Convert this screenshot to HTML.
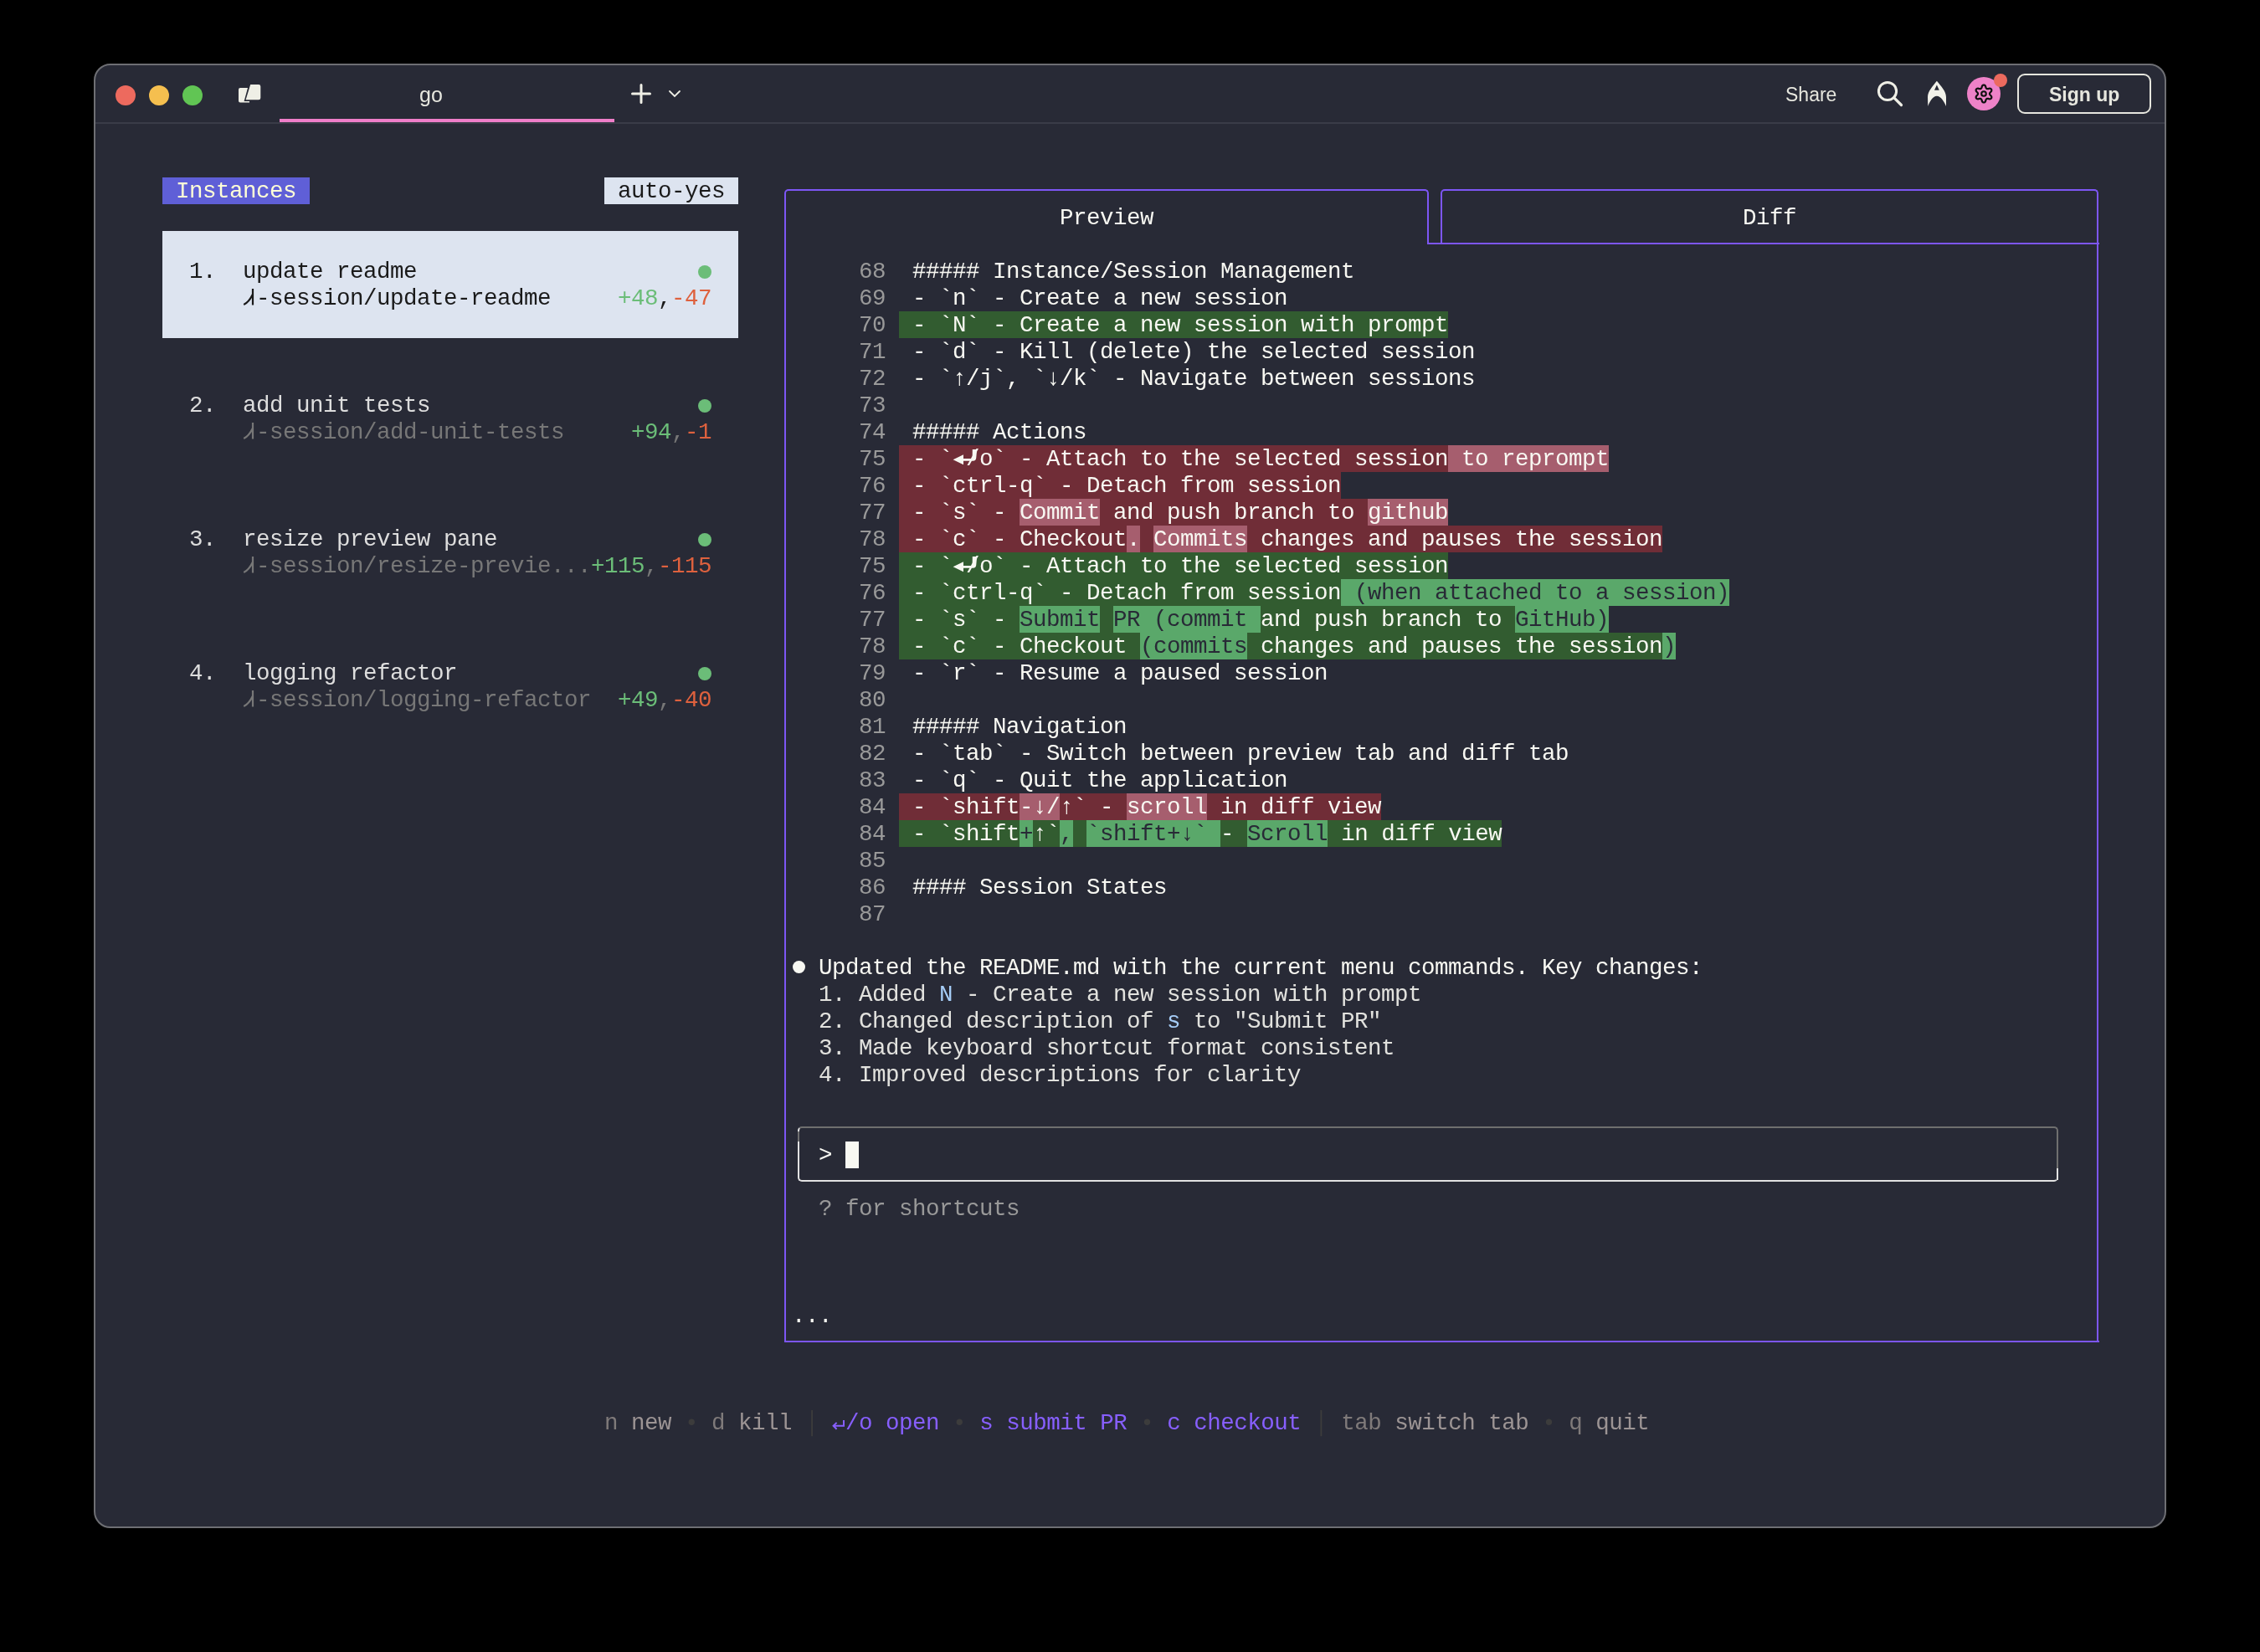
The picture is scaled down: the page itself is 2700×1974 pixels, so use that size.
<!DOCTYPE html>
<html><head><meta charset="utf-8">
<style>
html,body{margin:0;padding:0;background:#000;width:2700px;height:1974px;overflow:hidden;position:relative}
.win{position:absolute;left:112px;top:76px;width:2476px;height:1750px;box-sizing:border-box;border:2px solid #6e6f74;border-radius:20px;background:#282a36}
.dot{position:absolute;width:24px;height:24px;border-radius:50%}
.ui{position:absolute;font-family:"Liberation Sans",sans-serif;line-height:32px;white-space:pre}
.t{position:absolute;font-family:"Liberation Mono",monospace;font-size:27.5px;letter-spacing:-0.5025px;line-height:32px;height:32px;white-space:pre;color:#f8f8f2}
.ret,.ret2{position:absolute;width:16px;height:32px}
.ret::before{content:"";position:absolute;left:3px;top:15px;width:12px;height:3px;background:#f8f8f2}
.ret::after{content:"";position:absolute;left:1px;top:11px;width:0;height:0;border-top:5.5px solid transparent;border-bottom:5.5px solid transparent;border-right:8px solid #f8f8f2}
</style></head><body>
<div id="root" style="position:absolute;left:0;top:0;width:2700px;height:1974px;will-change:transform">

<div class="win"></div>
<div class="dot" style="left:138px;top:102px;background:#ed6a5e"></div>
<div class="dot" style="left:178px;top:102px;background:#f5bf4f"></div>
<div class="dot" style="left:218px;top:102px;background:#61c554"></div>
<svg style="position:absolute;left:282px;top:98px" width="32" height="28" viewBox="0 0 32 28">
  <path d="M3 9 a2 2 0 0 1 2 -2 H14 L9.6 23 H16 V24.5 H5 a2 2 0 0 1 -2 -2 Z" fill="#efefe6"/>
  <path d="M17.2 3 H27 a2.3 2.3 0 0 1 2.3 2.3 V19 a2.3 2.3 0 0 1 -2.3 2.3 H11.6 Z" fill="#efefe6"/>
</svg>
<div class="ui" style="left:501px;top:97px;font-size:25px;color:#e6e6de">go</div>
<div style="position:absolute;left:334px;top:142px;width:400px;height:4px;background:#ef7ec9"></div>
<div style="position:absolute;left:114px;top:146px;width:2472px;height:2px;background:#3a3c48"></div>
<svg style="position:absolute;left:752px;top:98px" width="28" height="28" viewBox="0 0 28 28">
  <path d="M14 3.5 v21 M3.5 14 h21" stroke="#efefe6" stroke-width="3" stroke-linecap="round"/>
</svg>
<svg style="position:absolute;left:796px;top:104px" width="20" height="16" viewBox="0 0 20 16">
  <path d="M4 5 l6 6 l6 -6" stroke="#efefe6" stroke-width="1.8" fill="none" stroke-linecap="round"/>
</svg>
<div class="ui" style="left:2133px;top:97px;font-size:23px;color:#e6e6de">Share</div>
<svg style="position:absolute;left:2240px;top:94px" width="36" height="36" viewBox="0 0 36 36">
  <circle cx="15" cy="15" r="10.6" stroke="#efefe6" stroke-width="3" fill="none"/>
  <path d="M22.6 22.6 L31.5 31.5" stroke="#efefe6" stroke-width="3.2" stroke-linecap="round"/>
</svg>
<svg style="position:absolute;left:2300px;top:96px" width="28" height="32" viewBox="0 0 28 32">
  <path d="M13.9 0.7 C 9 7, 3 13, 3 20 L 3.3 31 C 5 26, 9 18.8, 13.9 18.8 C 18.8 18.8, 23 26, 25 31 L 25 20 C 25 13, 19 7, 13.9 0.7 Z M13.9 5.5 L 11 11.8 H 16.8 Z" fill="#f2f2ea" fill-rule="evenodd"/>
</svg>
<div style="position:absolute;left:2350px;top:92px;width:40px;height:40px;border-radius:50%;background:#ee82c8"></div>
<svg style="position:absolute;left:2354px;top:96px" width="32" height="32" viewBox="0 0 32 32">
  <path d="M22.95 16.00 L23.00 15.63 L23.15 15.25 L23.40 14.83 L23.76 14.35 L24.40 13.75 L25.01 13.07 L25.25 12.45 L25.33 11.85 L25.26 11.28 L25.05 10.78 L24.71 10.34 L24.26 10.00 L23.70 9.77 L23.04 9.66 L22.15 9.85 L21.31 10.11 L20.72 10.18 L20.23 10.18 L19.82 10.12 L19.48 9.98 L19.18 9.75 L18.92 9.43 L18.69 9.00 L18.45 8.46 L18.25 7.60 L17.97 6.74 L17.55 6.22 L17.07 5.85 L16.54 5.62 L16.00 5.55 L15.46 5.62 L14.93 5.85 L14.45 6.22 L14.03 6.74 L13.75 7.60 L13.55 8.46 L13.31 9.00 L13.08 9.43 L12.82 9.75 L12.53 9.98 L12.18 10.12 L11.77 10.18 L11.28 10.18 L10.69 10.11 L9.85 9.85 L8.96 9.66 L8.30 9.77 L7.74 10.00 L7.29 10.34 L6.95 10.78 L6.74 11.28 L6.67 11.85 L6.75 12.45 L6.99 13.07 L7.60 13.75 L8.24 14.35 L8.60 14.83 L8.85 15.25 L9.00 15.63 L9.05 16.00 L9.00 16.37 L8.85 16.75 L8.60 17.17 L8.24 17.65 L7.60 18.25 L6.99 18.93 L6.75 19.55 L6.67 20.15 L6.74 20.72 L6.95 21.23 L7.29 21.66 L7.74 22.00 L8.30 22.23 L8.96 22.34 L9.85 22.15 L10.69 21.89 L11.28 21.82 L11.77 21.82 L12.18 21.88 L12.52 22.02 L12.82 22.25 L13.08 22.57 L13.31 23.00 L13.55 23.54 L13.75 24.40 L14.03 25.26 L14.45 25.78 L14.93 26.15 L15.46 26.38 L16.00 26.45 L16.54 26.38 L17.07 26.15 L17.55 25.78 L17.97 25.26 L18.25 24.40 L18.45 23.54 L18.69 23.00 L18.92 22.57 L19.18 22.25 L19.48 22.02 L19.82 21.88 L20.23 21.82 L20.72 21.82 L21.31 21.89 L22.15 22.15 L23.04 22.34 L23.70 22.23 L24.26 22.00 L24.71 21.66 L25.05 21.23 L25.26 20.72 L25.33 20.15 L25.25 19.55 L25.01 18.93 L24.40 18.25 L23.76 17.65 L23.40 17.17 L23.15 16.75 L23.00 16.37 L22.95 16.00Z" stroke="#111" stroke-width="2.2" fill="none" stroke-linejoin="round"/>
  <circle cx="16" cy="16" r="2.8" stroke="#111" stroke-width="2.1" fill="none"/>
</svg>
<div style="position:absolute;left:2382px;top:88px;width:16px;height:16px;border-radius:50%;background:#ec6a5e"></div>
<div style="position:absolute;left:2410px;top:88px;width:160px;height:48px;border:2px solid #e6e6de;border-radius:9px;box-sizing:border-box"></div>
<div class="ui" style="left:2448px;top:97px;font-size:23px;font-weight:bold;color:#e6e6de">Sign up</div>

<div style="position:absolute;left:194px;top:212px;width:176px;height:32px;background:#5f5fd7;"></div><div class="t" style="left:194px;top:213px;"><span style="color:#ffffd7"> Instances </span></div><div style="position:absolute;left:722px;top:212px;width:160px;height:32px;background:#dde4f0;"></div><div class="t" style="left:722px;top:213px;"><span style="color:#1a1a1a"> auto-yes </span></div><div style="position:absolute;left:194px;top:276px;width:688px;height:128px;background:#dde4f0;"></div><div class="t" style="left:226px;top:309px;"><span style="color:#1a1a1a">1.</span></div><div class="t" style="left:290px;top:309px;"><span style="color:#1a1a1a">update readme</span></div><div style="position:absolute;left:834px;top:317px;width:16px;height:16px;border-radius:50%;background:#6bbd78"></div><div class="t" style="left:290px;top:341px;"><span style="color:#1a1a1a"> -session/update-readme</span></div><svg style="position:absolute;left:290px;top:340px" width="16" height="32" viewBox="0 0 16 32"><path d="M12 5 V24.5 M1.2 24 Q 7.5 21 12 11.5" stroke="#1a1a1a" stroke-width="2.2" fill="none"/></svg><div class="t" style="left:738px;top:341px;"><span style="color:#6bbd78">+48</span><span style="color:#1a1a1a">,</span><span style="color:#de613e">-47</span></div><div class="t" style="left:226px;top:469px;"><span style="color:#dddddd">2.</span></div><div class="t" style="left:290px;top:469px;"><span style="color:#dddddd">add unit tests</span></div><div style="position:absolute;left:834px;top:477px;width:16px;height:16px;border-radius:50%;background:#6bbd78"></div><div class="t" style="left:290px;top:501px;"><span style="color:#777777"> -session/add-unit-tests</span></div><svg style="position:absolute;left:290px;top:500px" width="16" height="32" viewBox="0 0 16 32"><path d="M12 5 V24.5 M1.2 24 Q 7.5 21 12 11.5" stroke="#777777" stroke-width="2.2" fill="none"/></svg><div class="t" style="left:754px;top:501px;"><span style="color:#6bbd78">+94</span><span style="color:#777777">,</span><span style="color:#de613e">-1</span></div><div class="t" style="left:226px;top:629px;"><span style="color:#dddddd">3.</span></div><div class="t" style="left:290px;top:629px;"><span style="color:#dddddd">resize preview pane</span></div><div style="position:absolute;left:834px;top:637px;width:16px;height:16px;border-radius:50%;background:#6bbd78"></div><div class="t" style="left:290px;top:661px;"><span style="color:#777777"> -session/resize-previe...</span></div><svg style="position:absolute;left:290px;top:660px" width="16" height="32" viewBox="0 0 16 32"><path d="M12 5 V24.5 M1.2 24 Q 7.5 21 12 11.5" stroke="#777777" stroke-width="2.2" fill="none"/></svg><div class="t" style="left:706px;top:661px;"><span style="color:#6bbd78">+115</span><span style="color:#777777">,</span><span style="color:#de613e">-115</span></div><div class="t" style="left:226px;top:789px;"><span style="color:#dddddd">4.</span></div><div class="t" style="left:290px;top:789px;"><span style="color:#dddddd">logging refactor</span></div><div style="position:absolute;left:834px;top:797px;width:16px;height:16px;border-radius:50%;background:#6bbd78"></div><div class="t" style="left:290px;top:821px;"><span style="color:#777777"> -session/logging-refactor</span></div><svg style="position:absolute;left:290px;top:820px" width="16" height="32" viewBox="0 0 16 32"><path d="M12 5 V24.5 M1.2 24 Q 7.5 21 12 11.5" stroke="#777777" stroke-width="2.2" fill="none"/></svg><div class="t" style="left:738px;top:821px;"><span style="color:#6bbd78">+49</span><span style="color:#777777">,</span><span style="color:#de613e">-40</span></div><div style="position:absolute;left:937px;top:226px;width:770px;height:66px;border:2px solid #7d56f4;border-bottom:none;border-radius:5px 5px 0 0;box-sizing:border-box"></div><div style="position:absolute;left:1721px;top:226px;width:786px;height:66px;border:2px solid #7d56f4;border-bottom:none;border-radius:5px 5px 0 0;box-sizing:border-box"></div><div style="position:absolute;left:1706px;top:290px;width:802px;height:2px;background:#7d56f4;"></div><div style="position:absolute;left:937px;top:291px;width:2px;height:1313px;background:#7d56f4;"></div><div style="position:absolute;left:2505px;top:291px;width:2px;height:1313px;background:#7d56f4;"></div><div style="position:absolute;left:938px;top:1602px;width:1570px;height:2px;background:#7d56f4;"></div><div class="t" style="left:1266px;top:245px;"><span style="color:#f8f8f2">Preview</span></div><div class="t" style="left:2082px;top:245px;"><span style="color:#f8f8f2">Diff</span></div><div class="t" style="left:1026px;top:309px;"><span style="color:#999999">68</span></div><div class="t" style="left:1074px;top:309px;"><span style="color:#f8f8f2"> ##### Instance/Session Management</span></div><div class="t" style="left:1026px;top:341px;"><span style="color:#999999">69</span></div><div class="t" style="left:1074px;top:341px;"><span style="color:#f8f8f2"> - `n` - Create a new session</span></div><div class="t" style="left:1026px;top:373px;"><span style="color:#999999">70</span></div><div style="position:absolute;left:1074px;top:372px;width:656px;height:32px;background:#325c30;"></div><div class="t" style="left:1074px;top:373px;"><span style="color:#f8f8f2"> - `N` - Create a new session with prompt</span></div><div class="t" style="left:1026px;top:405px;"><span style="color:#999999">71</span></div><div class="t" style="left:1074px;top:405px;"><span style="color:#f8f8f2"> - `d` - Kill (delete) the selected session</span></div><div class="t" style="left:1026px;top:437px;"><span style="color:#999999">72</span></div><div class="t" style="left:1074px;top:437px;"><span style="color:#f8f8f2"> - `↑/j`, `↓/k` - Navigate between sessions</span></div><div class="t" style="left:1026px;top:469px;"><span style="color:#999999">73</span></div><div class="t" style="left:1074px;top:469px;"></div><div class="t" style="left:1026px;top:501px;"><span style="color:#999999">74</span></div><div class="t" style="left:1074px;top:501px;"><span style="color:#f8f8f2"> ##### Actions</span></div><div class="t" style="left:1026px;top:533px;"><span style="color:#999999">75</span></div><div style="position:absolute;left:1074px;top:532px;width:848px;height:32px;background:#702d37;"></div><div style="position:absolute;left:1730px;top:532px;width:192px;height:32px;background:#a65e6e;"></div><div class="t" style="left:1074px;top:533px;"><span style="color:#f8f8f2"> - ` /o` - Attach to the selected session</span><span style="color:#f8f8f2"> to reprompt</span></div><svg style="position:absolute;left:1138px;top:532px" width="32" height="32" viewBox="0 0 32 32"><path d="M0.6 17.2 L13 11.2 L13 23.3 Z M12 15.9 H25 V18.7 H12 Z M23.8 5 H29.2 L28.2 15.5 Q27.6 18.7 24.6 18.7 H23.6 Z" fill="#f8f8f2"/></svg><div class="t" style="left:1026px;top:565px;"><span style="color:#999999">76</span></div><div style="position:absolute;left:1074px;top:564px;width:528px;height:32px;background:#702d37;"></div><div class="t" style="left:1074px;top:565px;"><span style="color:#f8f8f2"> - `ctrl-q` - Detach from session</span></div><div class="t" style="left:1026px;top:597px;"><span style="color:#999999">77</span></div><div style="position:absolute;left:1074px;top:596px;width:656px;height:32px;background:#702d37;"></div><div style="position:absolute;left:1218px;top:596px;width:96px;height:32px;background:#a65e6e;"></div><div style="position:absolute;left:1634px;top:596px;width:96px;height:32px;background:#a65e6e;"></div><div class="t" style="left:1074px;top:597px;"><span style="color:#f8f8f2"> - `s` - </span><span style="color:#f8f8f2">Commit</span><span style="color:#f8f8f2"> and push branch to </span><span style="color:#f8f8f2">github</span></div><div class="t" style="left:1026px;top:629px;"><span style="color:#999999">78</span></div><div style="position:absolute;left:1074px;top:628px;width:912px;height:32px;background:#702d37;"></div><div style="position:absolute;left:1346px;top:628px;width:16px;height:32px;background:#a65e6e;"></div><div style="position:absolute;left:1378px;top:628px;width:112px;height:32px;background:#a65e6e;"></div><div class="t" style="left:1074px;top:629px;"><span style="color:#f8f8f2"> - `c` - Checkout</span><span style="color:#f8f8f2">.</span><span style="color:#f8f8f2"> </span><span style="color:#f8f8f2">Commits</span><span style="color:#f8f8f2"> changes and pauses the session</span></div><div class="t" style="left:1026px;top:661px;"><span style="color:#999999">75</span></div><div style="position:absolute;left:1074px;top:660px;width:656px;height:32px;background:#325c30;"></div><div class="t" style="left:1074px;top:661px;"><span style="color:#f8f8f2"> - ` /o` - Attach to the selected session</span></div><svg style="position:absolute;left:1138px;top:660px" width="32" height="32" viewBox="0 0 32 32"><path d="M0.6 17.2 L13 11.2 L13 23.3 Z M12 15.9 H25 V18.7 H12 Z M23.8 5 H29.2 L28.2 15.5 Q27.6 18.7 24.6 18.7 H23.6 Z" fill="#f8f8f2"/></svg><div class="t" style="left:1026px;top:693px;"><span style="color:#999999">76</span></div><div style="position:absolute;left:1074px;top:692px;width:992px;height:32px;background:#325c30;"></div><div style="position:absolute;left:1602px;top:692px;width:464px;height:32px;background:#5aa86a;"></div><div class="t" style="left:1074px;top:693px;"><span style="color:#f8f8f2"> - `ctrl-q` - Detach from session</span><span style="color:#282a36"> (when attached to a session)</span></div><div class="t" style="left:1026px;top:725px;"><span style="color:#999999">77</span></div><div style="position:absolute;left:1074px;top:724px;width:848px;height:32px;background:#325c30;"></div><div style="position:absolute;left:1218px;top:724px;width:96px;height:32px;background:#5aa86a;"></div><div style="position:absolute;left:1330px;top:724px;width:176px;height:32px;background:#5aa86a;"></div><div style="position:absolute;left:1810px;top:724px;width:112px;height:32px;background:#5aa86a;"></div><div class="t" style="left:1074px;top:725px;"><span style="color:#f8f8f2"> - `s` - </span><span style="color:#282a36">Submit</span><span style="color:#f8f8f2"> </span><span style="color:#282a36">PR (commit </span><span style="color:#f8f8f2">and push branch to </span><span style="color:#282a36">GitHub)</span></div><div class="t" style="left:1026px;top:757px;"><span style="color:#999999">78</span></div><div style="position:absolute;left:1074px;top:756px;width:928px;height:32px;background:#325c30;"></div><div style="position:absolute;left:1362px;top:756px;width:128px;height:32px;background:#5aa86a;"></div><div style="position:absolute;left:1986px;top:756px;width:16px;height:32px;background:#5aa86a;"></div><div class="t" style="left:1074px;top:757px;"><span style="color:#f8f8f2"> - `c` - Checkout </span><span style="color:#282a36">(commits</span><span style="color:#f8f8f2"> changes and pauses the session</span><span style="color:#282a36">)</span></div><div class="t" style="left:1026px;top:789px;"><span style="color:#999999">79</span></div><div class="t" style="left:1074px;top:789px;"><span style="color:#f8f8f2"> - `r` - Resume a paused session</span></div><div class="t" style="left:1026px;top:821px;"><span style="color:#999999">80</span></div><div class="t" style="left:1074px;top:821px;"></div><div class="t" style="left:1026px;top:853px;"><span style="color:#999999">81</span></div><div class="t" style="left:1074px;top:853px;"><span style="color:#f8f8f2"> ##### Navigation</span></div><div class="t" style="left:1026px;top:885px;"><span style="color:#999999">82</span></div><div class="t" style="left:1074px;top:885px;"><span style="color:#f8f8f2"> - `tab` - Switch between preview tab and diff tab</span></div><div class="t" style="left:1026px;top:917px;"><span style="color:#999999">83</span></div><div class="t" style="left:1074px;top:917px;"><span style="color:#f8f8f2"> - `q` - Quit the application</span></div><div class="t" style="left:1026px;top:949px;"><span style="color:#999999">84</span></div><div style="position:absolute;left:1074px;top:948px;width:576px;height:32px;background:#702d37;"></div><div style="position:absolute;left:1218px;top:948px;width:48px;height:32px;background:#a65e6e;"></div><div style="position:absolute;left:1346px;top:948px;width:96px;height:32px;background:#a65e6e;"></div><div class="t" style="left:1074px;top:949px;"><span style="color:#f8f8f2"> - `shift</span><span style="color:#f8f8f2">-↓/</span><span style="color:#f8f8f2">↑` - </span><span style="color:#f8f8f2">scroll</span><span style="color:#f8f8f2"> in diff view</span></div><div class="t" style="left:1026px;top:981px;"><span style="color:#999999">84</span></div><div style="position:absolute;left:1074px;top:980px;width:720px;height:32px;background:#325c30;"></div><div style="position:absolute;left:1218px;top:980px;width:16px;height:32px;background:#5aa86a;"></div><div style="position:absolute;left:1266px;top:980px;width:16px;height:32px;background:#5aa86a;"></div><div style="position:absolute;left:1298px;top:980px;width:160px;height:32px;background:#5aa86a;"></div><div style="position:absolute;left:1490px;top:980px;width:96px;height:32px;background:#5aa86a;"></div><div class="t" style="left:1074px;top:981px;"><span style="color:#f8f8f2"> - `shift</span><span style="color:#282a36">+</span><span style="color:#f8f8f2">↑`</span><span style="color:#282a36">,</span><span style="color:#f8f8f2"> </span><span style="color:#282a36">`shift+↓` </span><span style="color:#f8f8f2">- </span><span style="color:#282a36">Scroll</span><span style="color:#f8f8f2"> in diff view</span></div><div class="t" style="left:1026px;top:1013px;"><span style="color:#999999">85</span></div><div class="t" style="left:1074px;top:1013px;"></div><div class="t" style="left:1026px;top:1045px;"><span style="color:#999999">86</span></div><div class="t" style="left:1074px;top:1045px;"><span style="color:#f8f8f2"> #### Session States</span></div><div class="t" style="left:1026px;top:1077px;"><span style="color:#999999">87</span></div><div class="t" style="left:1074px;top:1077px;"></div><div style="position:absolute;left:947px;top:1148px;width:15px;height:15px;border-radius:50%;background:#f8f8f2"></div><div class="t" style="left:978px;top:1141px;"><span style="color:#f8f8f2">Updated the README.md with the current menu commands. Key changes:</span></div><div class="t" style="left:978px;top:1173px;"><span style="color:#e2e2de">1. Added </span><span style="color:#a6cdf7">N</span><span style="color:#e2e2de"> - Create a new session with prompt</span></div><div class="t" style="left:978px;top:1205px;"><span style="color:#e2e2de">2. Changed description of </span><span style="color:#a6cdf7">s</span><span style="color:#e2e2de"> to "Submit PR"</span></div><div class="t" style="left:978px;top:1237px;"><span style="color:#e2e2de">3. Made keyboard shortcut format consistent</span></div><div class="t" style="left:978px;top:1269px;"><span style="color:#e2e2de">4. Improved descriptions for clarity</span></div><div style="position:absolute;left:953px;top:1346px;width:1506px;height:66px;border:2px solid #6f6f6f;border-radius:5px;box-sizing:border-box;border-left-color:#e2e2e2;border-bottom-color:#e2e2e2"></div><div style="position:absolute;left:953px;top:1352px;width:2px;height:12px;background:#6f6f6f;"></div><div style="position:absolute;left:2457px;top:1396px;width:2px;height:14px;background:#e2e2e2;"></div><div class="t" style="left:978px;top:1365px;"><span style="color:#f8f8f2">&gt;</span></div><div style="position:absolute;left:1010px;top:1364px;width:16px;height:32px;background:#f8f8f2;"></div><div class="t" style="left:978px;top:1429px;"><span style="color:#999999">? for shortcuts</span></div><div class="t" style="left:946px;top:1557px;"><span style="color:#f8f8f2">...</span></div><div class="t" style="left:722px;top:1685px;"><span style="color:#7f7a7a">n</span><span style="color:#9c9494"> new</span><span style="color:#3c3c3c"> • </span><span style="color:#7f7a7a">d</span><span style="color:#9c9494"> kill</span><span style="color:#3c3c3c"> │ </span><span style="color:#875fff"> /o open</span><span style="color:#3c3c3c"> • </span><span style="color:#875fff">s submit PR</span><span style="color:#3c3c3c"> • </span><span style="color:#875fff">c checkout</span><span style="color:#3c3c3c"> │ </span><span style="color:#7f7a7a">tab</span><span style="color:#9c9494"> switch tab</span><span style="color:#3c3c3c"> • </span><span style="color:#7f7a7a">q</span><span style="color:#9c9494"> quit</span></div><svg style="position:absolute;left:994px;top:1684px" width="16" height="32" viewBox="0 0 16 32"><path d="M14 13 V19.8 H1.6 M5.6 15.9 L1.6 19.8 L5.6 23.7" stroke="#875fff" stroke-width="2" fill="none"/></svg>
</div>
</body></html>
